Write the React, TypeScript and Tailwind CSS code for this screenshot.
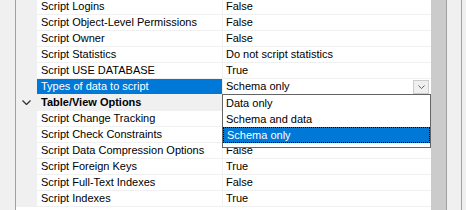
import React from 'react';

type Row =
  | { kind: 'prop'; label: string; value: string; selected?: boolean }
  | { kind: 'cat'; label: string };

// values of the two rows under the open list are not visible
const rows: Row[] = [
  { kind: 'prop', label: 'Script Logins', value: 'False' },
  { kind: 'prop', label: 'Script Object-Level Permissions', value: 'False' },
  { kind: 'prop', label: 'Script Owner', value: 'False' },
  { kind: 'prop', label: 'Script Statistics', value: 'Do not script statistics' },
  { kind: 'prop', label: 'Script USE DATABASE', value: 'True' },
  { kind: 'prop', label: 'Types of data to script', value: 'Schema only', selected: true },
  { kind: 'cat', label: 'Table/View Options' },
  { kind: 'prop', label: 'Script Change Tracking', value: '' },
  { kind: 'prop', label: 'Script Check Constraints', value: '' },
  { kind: 'prop', label: 'Script Data Compression Options', value: 'False' },
  { kind: 'prop', label: 'Script Foreign Keys', value: 'True' },
  { kind: 'prop', label: 'Script Full-Text Indexes', value: 'False' },
  { kind: 'prop', label: 'Script Indexes', value: 'True' },
];

const options = ['Data only', 'Schema and data', 'Schema only'];

const Chevron = ({ className, sw = 1 }: { className?: string; sw?: number }) => (
  <svg viewBox="0 0 9 5" className={className} fill="none" stroke="currentColor" strokeWidth={sw}>
    <path d="M0.5 0.5 L4.5 4.5 L8.5 0.5" />
  </svg>
);

export default function App() {
  return (
    <div
      className="relative flex h-[210px] w-[466px] overflow-hidden bg-[#f0f0f0] text-[11px] text-black"
      style={{ fontFamily: '"Liberation Sans", Arial, sans-serif' }}
    >
      <div className="w-[16px] shrink-0 border-r border-[#a0a0a0] bg-[#f0f0f0]" />

      {/* property grid */}
      <div className="-mt-px w-[415px] shrink-0 bg-white">
        {rows.map((r, i) =>
          r.kind === 'cat' ? (
            <div key={i} className="flex h-[16px] items-center border-b border-[#f0f0f0] bg-[#f0f0f0]">
              <div className="flex w-[21px] justify-center">
                <Chevron className="h-[5px] w-[9px] text-[#333333]" sw={1.3} />
              </div>
              <span className="pl-[4px] font-bold">{r.label}</span>
            </div>
          ) : (
            <div key={i} className="flex h-[16px] border-b border-[#f0f0f0]">
              <div className="w-[21px] shrink-0 bg-[#f0f0f0]" />
              <div
                className={`flex w-[185px] shrink-0 items-center pl-[4px] ${
                  r.selected ? 'bg-[#0078d7] text-white' : ''
                }`}
              >
                {r.label}
              </div>
              <div className="flex flex-1 items-center border-l border-[#f0f0f0] pl-[3px]">
                {r.value && <span>{r.value}</span>}
                {r.selected && (
                  <div className="ml-auto mr-[2px] flex h-[14px] w-[16px] items-center justify-center border border-[#cccccc] bg-[#f0f0f0]">
                    <Chevron className="h-[4px] w-[7px] text-[#404040]" />
                  </div>
                )}
              </div>
            </div>
          )
        )}
      </div>

      {/* splitter / side strips */}
      <div className="w-[15px] shrink-0 bg-[#cbcbcb]" />
      <div className="w-[16px] shrink-0 border-l border-r border-[#a0a0a0] bg-[#f0f0f0]" />
      <div className="flex-1 bg-[#f0f0f0]" />

      {/* dropdown list */}
      <div className="absolute left-[222px] top-[94px] h-[54px] w-[209px] border border-[#646464] bg-white">
        {options.map((o) => (
          <div
            key={o}
            className={`flex h-[16px] items-center pl-[3px] ${
              o === 'Schema only' ? 'border border-dotted border-black bg-[#0078d7] pl-[2px] text-white' : ''
            }`}
          >
            {o}
          </div>
        ))}
      </div>
    </div>
  );
}
